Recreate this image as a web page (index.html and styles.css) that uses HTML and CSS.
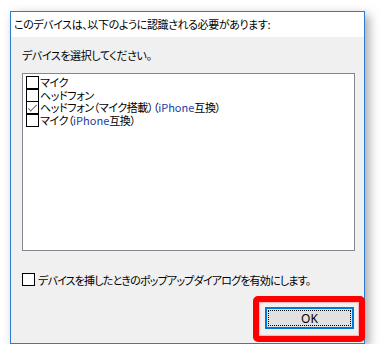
FILE: index.html
```html
<!DOCTYPE html>
<html>
<head>
    <meta charset="UTF-8">
    <title>デバイスの認識</title>
    <link rel="stylesheet" href="styles.css">
</head>
<body>
    <div class="window">
        <div class="header">このデバイスは、以下のように認識される必要があります:</div>
        <div class="content">
            <div class="label">デバイスを選択してください。</div>
            <ul class="listbox">
                <li><span class="box"></span>マイク</li>
                <li><span class="box"></span>ヘッドフォン</li>
                <li><span class="box checked"></span>ヘッドフォン（マイク搭載）（<span class="blue">iPhone</span>互換）</li>
                <li><span class="box"></span>マイク（<span class="blue">iPhone</span>互換）</li>
            </ul>
            <div class="option"><span class="box"></span>デバイスを挿したときのポップアップダイアログを有効にします。</div>
            <div class="buttons">
                <button type="button" class="ok">OK</button>
            </div>
        </div>
        <!-- highlight around the OK button -->
        <div class="highlight"></div>
    </div>
</body>
</html>
```

FILE: styles.css
```css
body {
    margin: 0;
    background-color: #ffffff;
    font-family: "Noto Sans CJK JP", "Noto Sans", sans-serif;
    font-size: 11px;
    letter-spacing: -0.4px;
    font-feature-settings: "palt";
    color: #000000;
}
.window {
    position: relative;
    margin: 11px 0 0 10px;
    width: 353px;
    height: 331px;
    border: 1px solid #2b7bd3;
    background-color: #f0f0f0;
    box-shadow: 4px 4px 10px rgba(0, 0, 0, 0.35);
    display: flex;
    flex-direction: column;
}
.header {
    height: 25px;
    line-height: 25px;
    padding-left: 3px;
    background-color: #ffffff;
    white-space: nowrap;
}
.content {
    padding: 0 9px 0 11px;
    display: flex;
    flex-direction: column;
}
.label {
    margin-top: 10px;
    height: 16px;
    line-height: 16px;
}
.listbox {
    list-style: none;
    margin: 10px 0 0 0;
    padding: 2px 0 0 3px;
    height: 174px;
    border: 1px solid #828790;
    background-color: #ffffff;
}
.listbox li {
    display: flex;
    align-items: flex-start;
    height: 12.5px;
    line-height: 12.5px;
    white-space: nowrap;
}
.box {
    position: relative;
    flex: none;
    box-sizing: border-box;
    width: 13px;
    height: 13px;
    border: 1px solid #000000;
    background-color: #ffffff;
    margin-right: 1px;
}
.checked::after {
    content: "";
    position: absolute;
    left: 1px;
    top: 1px;
    width: 8px;
    height: 3px;
    border-left: 1px solid #666666;
    border-bottom: 1px solid #666666;
    transform: translate(0, 2px) rotate(-45deg);
}
.blue {
    color: #1b3ca6;
    letter-spacing: 0;
}
.option {
    margin-top: 22px;
    display: flex;
    align-items: center;
    height: 13px;
    letter-spacing: -0.8px;
    white-space: nowrap;
}
.option .box {
    margin-right: 3px;
}
.buttons {
    margin-top: 21px;
    display: flex;
    justify-content: flex-end;
    padding-right: 1px;
}
.ok {
    width: 89px;
    height: 22px;
    padding: 0;
    border: 2px solid #0078d7;
    background-color: #e1e1e1;
    outline: 1px dotted #000000;
    outline-offset: -4px;
    font-family: "Noto Sans", sans-serif;
    font-size: 12px;
    letter-spacing: 0;
    color: #000000;
}
.highlight {
    position: absolute;
    left: 242px;
    top: 284px;
    width: 100px;
    height: 34px;
    border: 6px solid #ff0000;
    border-radius: 5px;
    box-shadow: inset 0 0 1px 1px rgba(255, 120, 120, 0.5);
}
```
